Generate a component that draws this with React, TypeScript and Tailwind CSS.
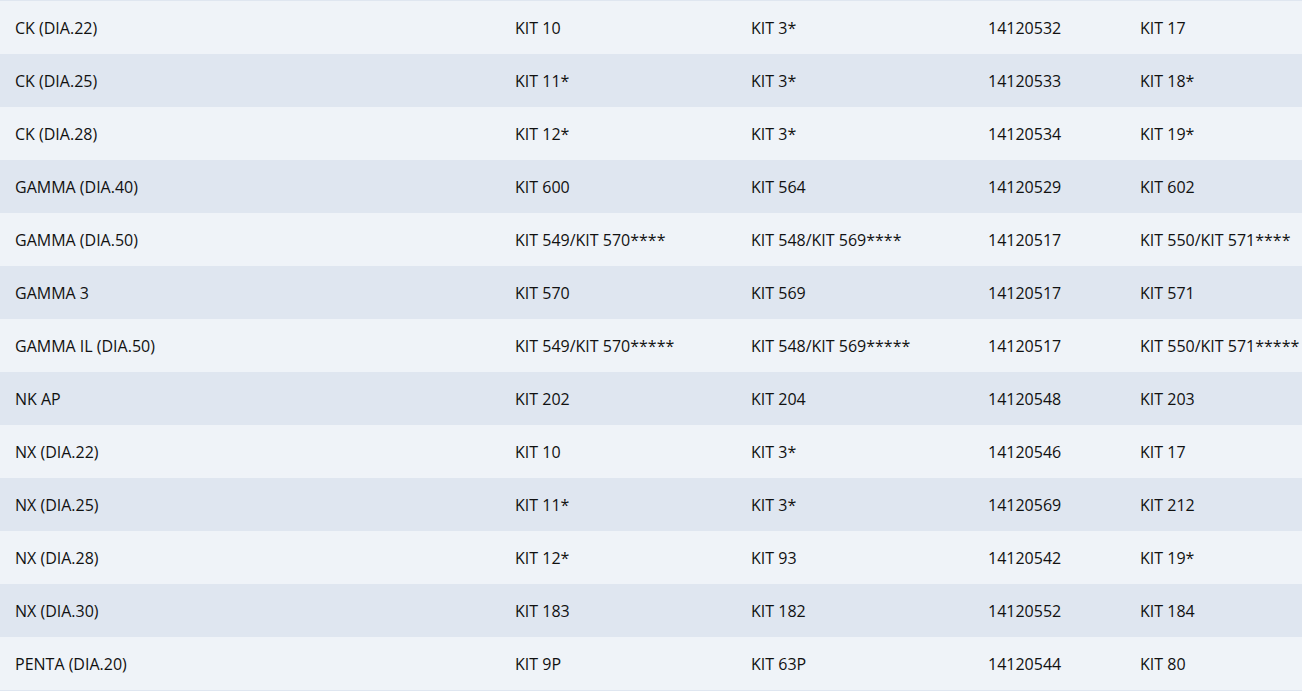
const rows: [string, string, string, string, string][] = [
  ['CK (DIA.22)', 'KIT 10', 'KIT 3*', '14120532', 'KIT 17'],
  ['CK (DIA.25)', 'KIT 11*', 'KIT 3*', '14120533', 'KIT 18*'],
  ['CK (DIA.28)', 'KIT 12*', 'KIT 3*', '14120534', 'KIT 19*'],
  ['GAMMA (DIA.40)', 'KIT 600', 'KIT 564', '14120529', 'KIT 602'],
  ['GAMMA (DIA.50)', 'KIT 549/KIT 570****', 'KIT 548/KIT 569****', '14120517', 'KIT 550/KIT 571****'],
  ['GAMMA 3', 'KIT 570', 'KIT 569', '14120517', 'KIT 571'],
  ['GAMMA IL (DIA.50)', 'KIT 549/KIT 570*****', 'KIT 548/KIT 569*****', '14120517', 'KIT 550/KIT 571*****'],
  ['NK AP', 'KIT 202', 'KIT 204', '14120548', 'KIT 203'],
  ['NX (DIA.22)', 'KIT 10', 'KIT 3*', '14120546', 'KIT 17'],
  ['NX (DIA.25)', 'KIT 11*', 'KIT 3*', '14120569', 'KIT 212'],
  ['NX (DIA.28)', 'KIT 12*', 'KIT 93', '14120542', 'KIT 19*'],
  ['NX (DIA.30)', 'KIT 183', 'KIT 182', '14120552', 'KIT 184'],
  ['PENTA (DIA.20)', 'KIT 9P', 'KIT 63P', '14120544', 'KIT 80'],
]

export default function App() {
  return (
    <div className="w-[1302px] h-[691px] overflow-hidden bg-[#eff3f8] text-[#111111] text-[16px] font-['Open_Sans',sans-serif]">
      <div className="border-y border-[#dfe6f0]">
        {rows.map((row, i) => (
          <div
            key={i}
            className={`grid grid-cols-[500px_236px_237px_152px_1fr] h-[53px] items-center ${i % 2 ? 'bg-[#dfe6f0]' : 'bg-[#eff3f8]'}`}
          >
            {row.map((cell, j) => (
              <div key={j} className="pl-[15px] whitespace-nowrap">{cell}</div>
            ))}
          </div>
        ))}
      </div>
    </div>
  )
}
